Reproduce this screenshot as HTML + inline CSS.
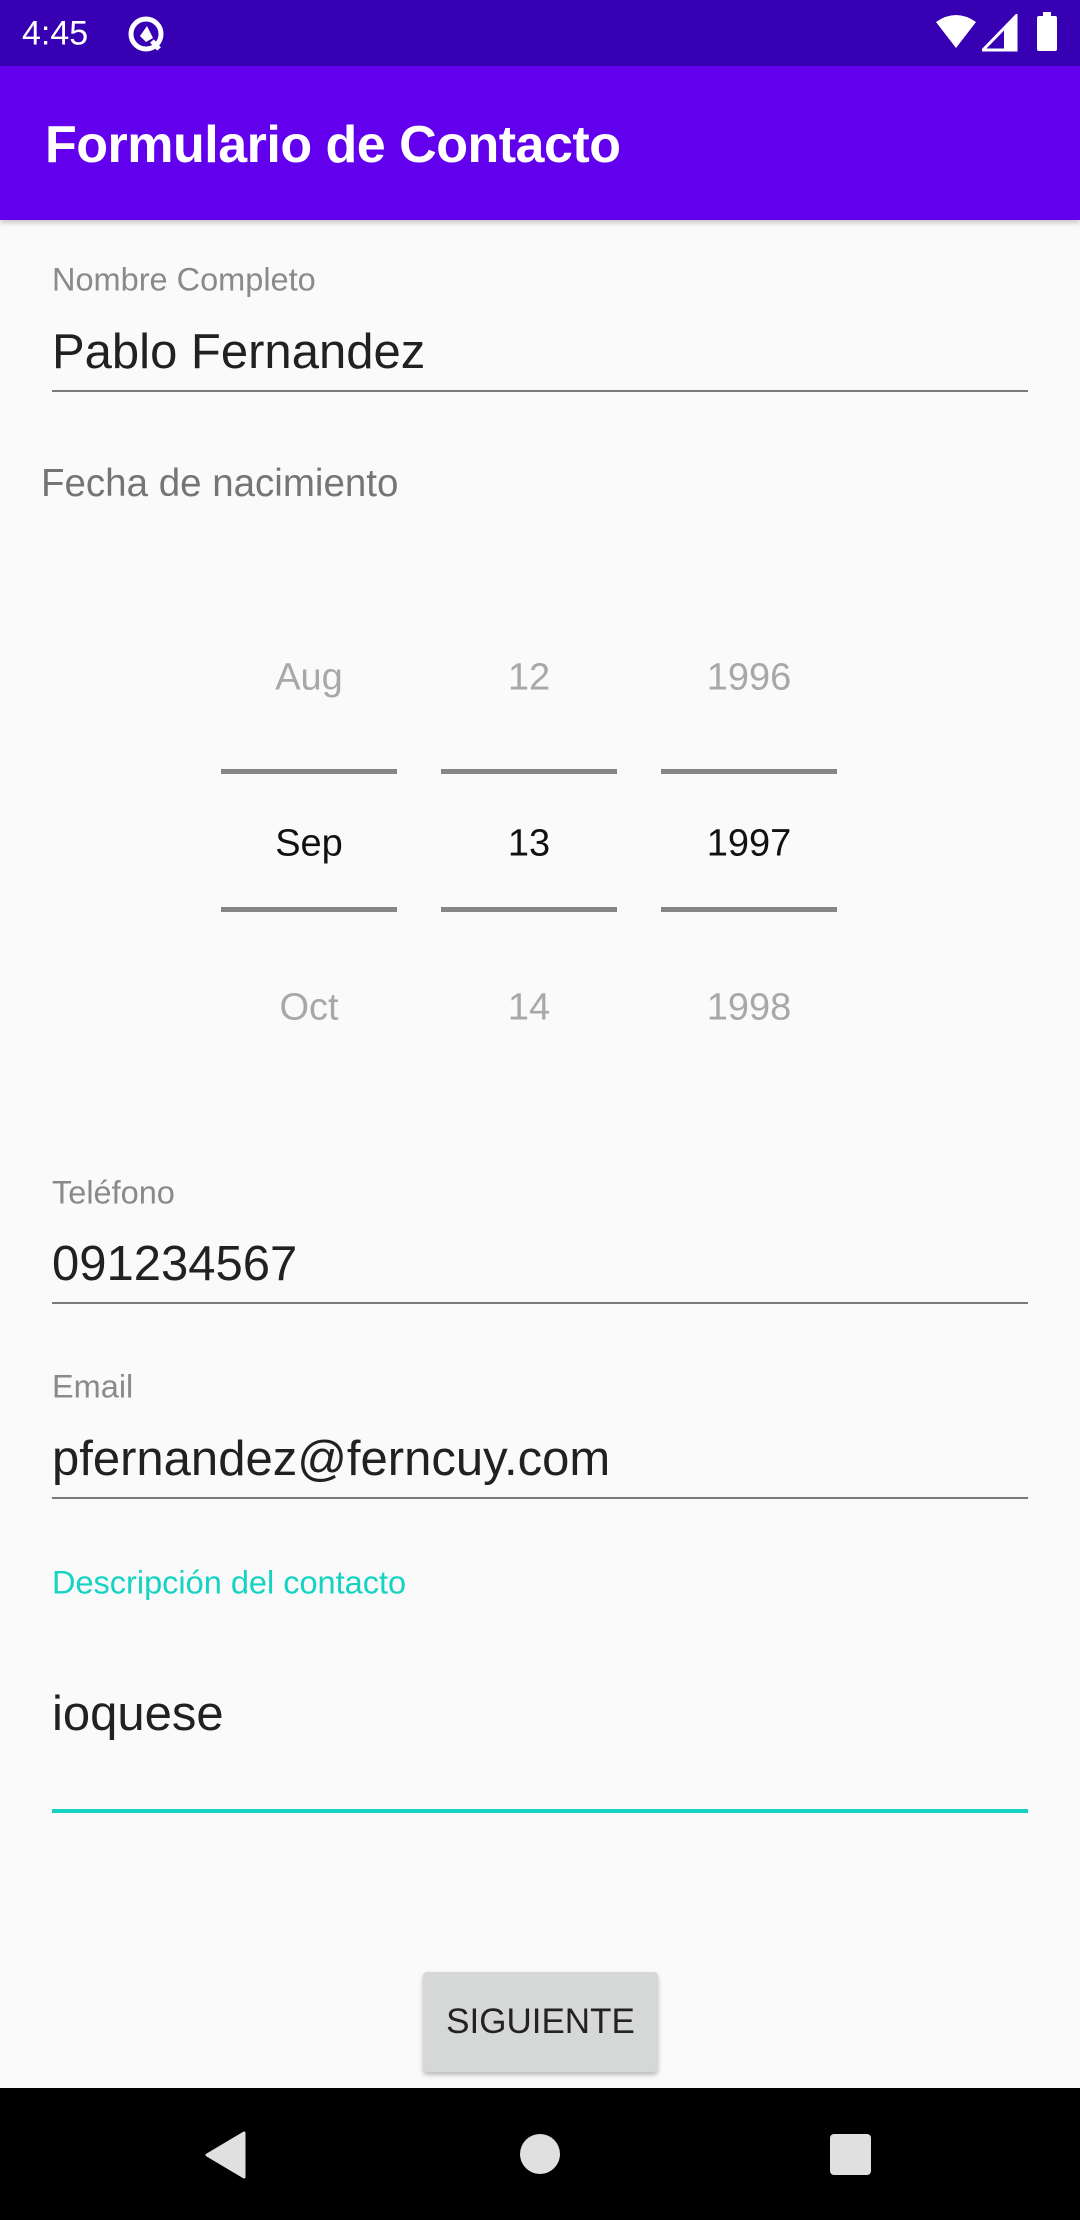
<!DOCTYPE html>
<html><head><meta charset="utf-8"><style>
*{margin:0;padding:0;box-sizing:border-box}
body{width:1080px;height:2220px;background:#fafafa;position:relative;overflow:hidden;font-family:"Liberation Sans",sans-serif}
.a{position:absolute;white-space:nowrap}
.c{transform:translate(-50%,-50%)}
.m{transform:translateY(-50%)}
.lab{font-size:32.5px;color:#8a8a8a;left:52px}
.val{font-size:49px;color:#212121;left:52px}
.ul{position:absolute;left:52px;width:976px;height:2px;background:#7a7a7a}
.pk{font-size:38px}
.g{color:#a8a8a8}.b{color:#111}
.pl{position:absolute;height:5px;background:#868686;width:176px}
</style></head><body>
<div class="a" style="left:0;top:0;width:1080px;height:66px;background:#3700b3"></div>
<div class="a m" style="left:22px;top:34px;font-size:34px;color:#fff">4:45</div>
<svg class="a" style="left:126px;top:14px" width="40" height="40" viewBox="0 0 40 40"><circle cx="20" cy="20" r="15" fill="none" stroke="#fff" stroke-width="5"/><path d="M14 22 L21 12 L27 24 L20 28 Z" fill="#fff"/><path d="M26 27 L33 35" stroke="#fff" stroke-width="5"/></svg>
<svg class="a" style="left:936px;top:14px" width="40" height="38" viewBox="0 0 40 38"><path d="M0 8 Q20 -6 40 8 L20 34 Z" fill="#fff"/></svg>
<svg class="a" style="left:982px;top:14px" width="36" height="38" viewBox="0 0 36 38"><path d="M34 2 L34 36 L1 36 Z" fill="none" stroke="#fff" stroke-width="3"/><path d="M34 2 L34 36 L22 36 L22 16 Z" fill="#fff"/></svg>
<div class="a" style="left:1037px;top:16px;width:20px;height:35px;background:#fff;border-radius:2px"></div>
<div class="a" style="left:1043px;top:12px;width:8px;height:5px;background:#fff"></div>
<div class="a" style="left:0;top:66px;width:1080px;height:154px;background:#6200ee;box-shadow:0 3px 5px rgba(0,0,0,.2)"></div>
<div class="a m" style="left:45px;top:145px;font-size:52px;color:#fff;font-weight:bold;letter-spacing:-0.5px">Formulario de Contacto</div>

<div class="a lab m" style="top:280px">Nombre Completo</div>
<div class="a val m" style="top:352px">Pablo Fernandez</div>
<div class="ul" style="top:390px"></div>

<div class="a m" style="left:41px;top:484px;font-size:38.5px;color:#757575">Fecha de nacimiento</div>

<div class="a pk g c" style="left:309px;top:678px">Aug</div>
<div class="a pk g c" style="left:529px;top:678px">12</div>
<div class="a pk g c" style="left:749px;top:678px">1996</div>
<div class="pl" style="left:221px;top:769px"></div>
<div class="pl" style="left:441px;top:769px"></div>
<div class="pl" style="left:661px;top:769px"></div>
<div class="a pk b c" style="left:309px;top:844px">Sep</div>
<div class="a pk b c" style="left:529px;top:844px">13</div>
<div class="a pk b c" style="left:749px;top:844px">1997</div>
<div class="pl" style="left:221px;top:907px"></div>
<div class="pl" style="left:441px;top:907px"></div>
<div class="pl" style="left:661px;top:907px"></div>
<div class="a pk g c" style="left:309px;top:1008px">Oct</div>
<div class="a pk g c" style="left:529px;top:1008px">14</div>
<div class="a pk g c" style="left:749px;top:1008px">1998</div>

<div class="a lab m" style="top:1193px">Teléfono</div>
<div class="a val m" style="top:1264px">091234567</div>
<div class="ul" style="top:1302px"></div>

<div class="a lab m" style="top:1583px;color:#14d3c3;display:none"></div>
<div class="a lab m" style="top:1387px">Email</div>
<div class="a val m" style="top:1459px">pfernandez@ferncuy.com</div>
<div class="ul" style="top:1497px"></div>

<div class="a lab m" style="top:1583px;color:#14d3c3">Descripción del contacto</div>
<div class="a val m" style="top:1714px">ioquese</div>
<div class="ul" style="top:1809px;height:4px;background:#14d3c3"></div>

<div class="a" style="left:423px;top:1972px;width:235px;height:100px;background:#d6d7d7;border-radius:4px;box-shadow:0 3px 5px rgba(0,0,0,.25);font-size:35px;color:#222;text-align:center;line-height:100px">SIGUIENTE</div>

<div class="a" style="left:0;top:2088px;width:1080px;height:132px;background:#000"></div>
<svg class="a" style="left:204px;top:2131px" width="44" height="48" viewBox="0 0 44 48"><path d="M40 2 L40 46 L3 24 Z" fill="#e0e0e0" stroke="#e0e0e0" stroke-width="3" stroke-linejoin="round"/></svg>
<div class="a" style="left:520px;top:2134px;width:40px;height:40px;border-radius:50%;background:#e0e0e0"></div>
<div class="a" style="left:830px;top:2134px;width:41px;height:41px;border-radius:4px;background:#e0e0e0"></div>
</body></html>
